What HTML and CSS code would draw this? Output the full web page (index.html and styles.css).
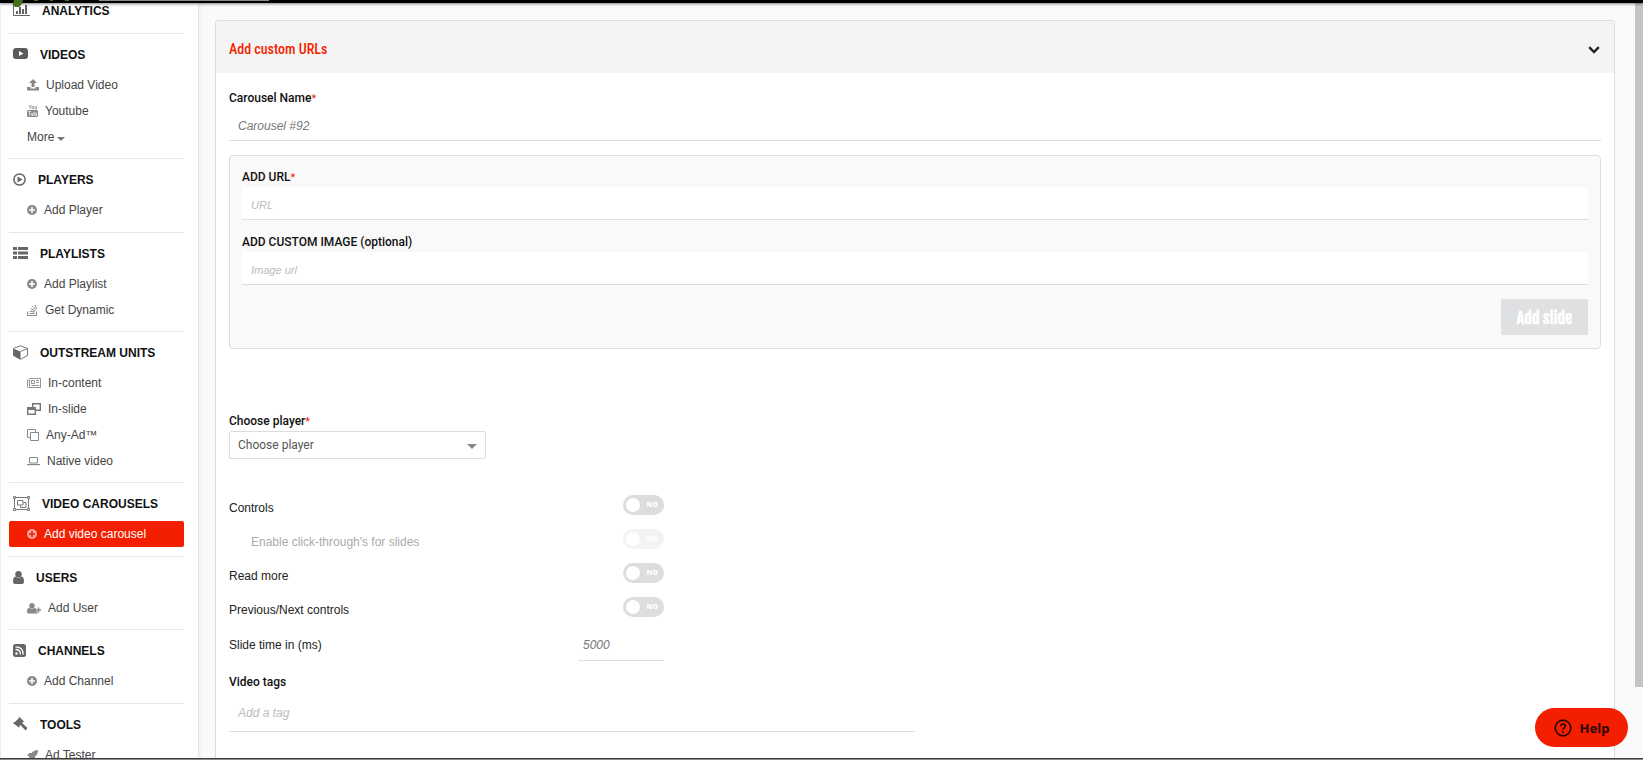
FILE: index.html
```html
<!DOCTYPE html>
<html lang="en">

<head>
    <meta charset="UTF-8">
    <meta name="viewport" content="width=device-width, initial-scale=1.0">
    <title>Add video carousel</title>
    <link rel="stylesheet" href="styles.css">
</head>

<body>
    <div class="topbar">
        <svg width="280" height="8" viewBox="0 0 280 8">
            <path d="M14 0h9l-1 4-3 3h-4l-2-3z" fill="#47701c" />
            <path d="M34 0h4v1h-4zM50 0h3v1h-3zM65 0h4v1h-4z" fill="#47701c" />
            <path d="M99 0h170v1H99z" fill="#8a8a8a" />
        </svg>
    </div>

    <div class="layout">
        <!-- Sidebar -->
        <nav class="sidebar">
            <div class="menu menu-first">
                <h2><svg width="17" height="14" viewBox="0 0 17 14"><path d="M.5 0v12.500H17" fill="none" stroke="#666" /><path d="M3 8h2v3H3zM6 4h2v7H6zM9 6h2v5H9zM12 2h2v9h-2z" fill="#666" /></svg>ANALYTICS</h2>
            </div>

            <div class="menu">
                <h2><svg width="15" height="12" viewBox="0 0 15 12"><rect width="15" height="11" rx="3" fill="#5c5c5c" /><path d="M6 3l4.500 2.500L6 8z" fill="#fff" /></svg>VIDEOS</h2>
                <a href="#"><svg width="12" height="12" viewBox="0 0 12 12"><path d="M6 0l4 4H7.500v4h-3V4H2zM0 8h3.500v1.500h5V8H12v3.500H0z" fill="#888" /></svg>Upload Video</a>
                <a href="#"><svg width="11" height="12" viewBox="0 0 11 12"><path d="M2 0l1.200 2.200V4M4.500 0L3.200 2.200M5 1.500h1.500v2.300H5zM8 1v3h1.500V1" fill="none" stroke="#999" stroke-width=".8" /><rect y="5" width="11" height="7" rx="1.500" fill="#888" /><path d="M1.500 6.500h2.500M2.700 6.500v4M4.800 8v2.500h1.200V8M7.300 6.500v4M8.300 8h1.200v2.500H8" fill="none" stroke="#fff" stroke-width=".8" /></svg>Youtube</a>
                <a href="#">More<span class="caret"></span></a>
            </div>

            <div class="menu menu-short">
                <h2><svg width="13" height="13" viewBox="0 0 13 13"><circle cx="6.500" cy="6.500" r="5.600" fill="none" stroke="#666" stroke-width="1.500" /><path d="M4.500 3.500l5 3-5 3z" fill="#666" /></svg>PLAYERS</h2>
                <a href="#"><svg width="10" height="10" viewBox="0 0 10 10"><circle cx="5" cy="5" r="5" fill="#888" /><path d="M5 2v6M2 5h6" stroke="#fff" stroke-width="1.600" /></svg>Add Player</a>
            </div>

            <div class="menu">
                <h2><svg width="15" height="12" viewBox="0 0 15 12"><path d="M0 0h4v3H0zM5 0h10v3H5zM0 4.500h4v3H0zM5 4.500h10v3H5zM0 9h4v3H0zM5 9h10v3H5z" fill="#666" /></svg>PLAYLISTS</h2>
                <a href="#"><svg width="10" height="10" viewBox="0 0 10 10"><circle cx="5" cy="5" r="5" fill="#888" /><path d="M5 2v6M2 5h6" stroke="#fff" stroke-width="1.600" /></svg>Add Playlist</a>
                <a href="#"><svg width="11" height="12" viewBox="0 0 11 12"><path d="M.5 7.500v4h9v-4M2.500 9.500h5M2.700 7.200l5 .8M3.700 4.700l4.500 2M5.500 2.500L9 5.500M7.700.8l2.200 4" fill="none" stroke="#888" /></svg>Get Dynamic</a>
            </div>

            <div class="menu">
                <h2><svg width="15" height="15" viewBox="0 0 15 15"><path d="M.5 3.500L7.500.700l7 2.800v7l-7 3.800-7-3.800z" fill="#fff" stroke="#777" /><path d="M.5 3.800l7 2.800v7.800l-7-3.800z" fill="#666" /><path d="M7.500 6.500l7-3" stroke="#777" /></svg>OUTSTREAM UNITS</h2>
                <a href="#"><svg width="14" height="10" viewBox="0 0 14 10"><path d="M2.500.500h11v9H1.500q-1 0-1-1V2h2v6.500M4.500 2.500h3v3h-3zM9 2.500h3M9 4.500h3M4.500 7.500H12" fill="none" stroke="#888" stroke-width=".9" /></svg>In-content</a>
                <a href="#"><svg width="14" height="12" viewBox="0 0 14 12"><path d="M.700 4.700h7.600v6.600H.700zM5.700 4V.700h7.600v6.600H9" fill="none" stroke="#777" stroke-width="1.400" /><path d="M0 4h9v3H0z" fill="#777" /></svg>In-slide</a>
                <a href="#"><svg width="12" height="12" viewBox="0 0 12 12"><path d="M3.500 3.500h8v8h-8zM3 8.500H.5v-8h8V3" fill="none" stroke="#888" /></svg>Any-Ad™</a>
                <a href="#"><svg width="13" height="10" viewBox="0 0 13 10"><path d="M2.500 1.500h8v5.500h-8z" fill="none" stroke="#888" /><path d="M0 8h13v1.200H0z" fill="#888" /></svg>Native video</a>
            </div>

            <div class="menu menu-short">
                <h2><svg width="17" height="15" viewBox="0 0 17 15"><path d="M1.500 2v11M15.500 2v11M2 1.500h13M2 13.500h13M4.500 4.500h5.500v4.500H4.500zM10.500 6.500h2.500v5H7.500V9.500" fill="none" stroke="#777" /><path d="M.5.500h2v2h-2zM14.500.500h2v2h-2zM.5 12.500h2v2h-2zM14.500 12.500h2v2h-2z" fill="#fff" stroke="#777" /></svg>VIDEO CAROUSELS</h2>
                <a href="#" class="active"><svg width="10" height="10" viewBox="0 0 10 10"><circle cx="5" cy="5" r="5" fill="#fba69c" /><path d="M5 2v6M2 5h6" stroke="#f31f00" stroke-width="1.600" /></svg>Add video carousel</a>
            </div>

            <div class="menu">
                <h2><svg width="11" height="13" viewBox="0 0 11 13"><circle cx="5.500" cy="3.200" r="3.200" fill="#666" /><path d="M2.500 5.500q3 2.500 6 0Q11 6 11 10.500q0 2.500-2 2.500H2q-2 0-2-2.500Q0 6 2.500 5.500z" fill="#666" /></svg>USERS</h2>
                <a href="#"><svg width="14" height="11" viewBox="0 0 14 11"><circle cx="5" cy="2.700" r="2.700" fill="#888" /><path d="M2.300 4.700q2.700 2 5.400 0 1.300.300 1.300 1.800v2h1.500v2H1.500Q0 10.500 0 9q0-4 2.300-4.300z" fill="#888" /><path d="M11.500 4.500v5M9 7h5" stroke="#888" stroke-width="1.500" /></svg>Add User</a>
            </div>

            <div class="menu menu-short">
                <h2><svg width="13" height="13" viewBox="0 0 13 13"><rect width="13" height="13" rx="2.500" fill="#666" /><circle cx="3.500" cy="9.500" r="1.200" fill="#fff" /><path d="M2.500 5.500q5 0 5 5M2.500 2.800q7.700 0 7.700 7.700" fill="none" stroke="#fff" stroke-width="1.300" /></svg>CHANNELS</h2>
                <a href="#"><svg width="10" height="10" viewBox="0 0 10 10"><circle cx="5" cy="5" r="5" fill="#888" /><path d="M5 2v6M2 5h6" stroke="#fff" stroke-width="1.600" /></svg>Add Channel</a>
            </div>

            <div class="menu">
                <h2><svg width="15" height="14" viewBox="0 0 15 14"><path d="M6.500 0l4.500 4.500-1 1-.6-.3L9 6l5.500 5-2 2.500L7.500 8l-1 .8.300.700-1 1L0 6l1-1 .7.300 3.600-3.600L5.500 1z" fill="#666" /></svg>TOOLS</h2>
                <a href="#"><svg width="11" height="11" viewBox="0 0 11 11"><path d="M11 0Q7 0 4.500 3H2L0 6h2.500l-.7 1.500 1.700 1.700L5 8.500V11l3-2V6.500Q11 4 11 0zM1.500 8.500L0 11l2.500-1.500z" fill="#888" /></svg>Ad Tester</a>
            </div>
        </nav>

        <!-- Content -->
        <main class="content">
            <form class="card">
                <div class="card-header">
                    <h1>Add custom URLs</h1>
                    <button type="button" class="toggle-card" aria-label="Collapse">
                        <svg width="12" height="8" viewBox="0 0 12 8"><path d="M1.200 1.200L6 6l4.800-4.800" fill="none" stroke="#222" stroke-width="2.400" /></svg>
                    </button>
                </div>

                <div class="card-body">
                    <label class="label" for="carouselName">Carousel Name<span class="required">*</span></label>
                    <input type="text" id="carouselName" class="input" placeholder="Carousel #92">

                    <div class="slide-box">
                        <label class="label" for="slideUrl">ADD URL<span class="required">*</span></label>
                        <input type="text" id="slideUrl" class="input input-light" placeholder="URL">
                        <label class="label label-next" for="slideImage">ADD CUSTOM IMAGE (optional)</label>
                        <input type="text" id="slideImage" class="input input-light" placeholder="Image url">
                        <button type="button" class="add-slide" disabled>Add slide</button>
                    </div>

                    <label class="label" for="player">Choose player<span class="required">*</span></label>
                    <div class="select">
                        <select id="player">
                            <option>Choose player</option>
                        </select>
                    </div>

                    <div class="options">
                        <div class="option">
                            <label for="controls">Controls</label>
                            <input type="checkbox" id="controls" class="switch">
                        </div>
                        <div class="option option-disabled">
                            <label for="clickThrough">Enable click-through's for slides</label>
                            <input type="checkbox" id="clickThrough" class="switch" disabled>
                        </div>
                        <div class="option">
                            <label for="readMore">Read more</label>
                            <input type="checkbox" id="readMore" class="switch">
                        </div>
                        <div class="option">
                            <label for="prevNext">Previous/Next controls</label>
                            <input type="checkbox" id="prevNext" class="switch">
                        </div>
                        <div class="option option-time">
                            <label for="slideTime">Slide time in (ms)</label>
                            <input type="text" id="slideTime" class="time-input" placeholder="5000">
                        </div>
                    </div>

                    <label class="label" for="tags">Video tags</label>
                    <input type="text" id="tags" class="input tags-input" placeholder="Add a tag">
                </div>
            </form>
        </main>
    </div>

    <div class="scroll-thumb"></div>
    <button type="button" class="help">
        <svg width="18" height="18" viewBox="0 0 18 18"><circle cx="9" cy="9" r="7.800" fill="none" stroke="#2b0500" stroke-width="1.700" /><path d="M6.700 7.200q0-2.200 2.300-2.200t2.300 2q0 1-1.200 1.800T9 10.800" fill="none" stroke="#2b0500" stroke-width="1.600" /><circle cx="9" cy="13" r="1" fill="#2b0500" /></svg>
        Help
    </button>
    <div class="bottombar"></div>
</body>

</html>
```

FILE: styles.css
```css
* {
    margin: 0;
    padding: 0;
    box-sizing: border-box;
}

body {
    height: 100vh;
    overflow: hidden;
    font-family: "Liberation Sans", Arial, sans-serif;
    font-size: 12px;
    color: #222;
    background-color: #fafafa;
}

.topbar {
    position: fixed;
    top: 0;
    left: 0;
    right: 0;
    height: 3px;
    background-color: #000;
    box-shadow: 0 1px 3px rgba(0, 0, 0, 0.5);
    z-index: 2;
}

.topbar svg {
    display: block;
}

.bottombar {
    position: fixed;
    bottom: 0;
    left: 0;
    right: 0;
    height: 2px;
    background-color: #8c8c8c;
    border-top: 1px solid #3c3c3c;
}

.layout {
    display: flex;
    min-height: 100vh;
}

/* Sidebar */
.sidebar {
    flex: none;
    width: 199px;
    padding: 0 14px 0 8px;
    background-color: #fff;
    border-left: 1px solid #eee;
    border-right: 1px solid #e6e6e6;
    box-shadow: 1px 0 4px rgba(0, 0, 0, 0.06);
}

.menu {
    padding: 12px 0 8px;
    border-top: 1px solid #e6e6e6;
}

.menu-short {
    padding-bottom: 9px;
}

.menu-first {
    padding: 2px 0 5px;
    border-top: none;
}

.menu h2 {
    display: flex;
    align-items: center;
    gap: 12px;
    height: 18px;
    margin-bottom: 8px;
    padding-left: 4px;
    font-size: 12px;
    font-weight: bold;
    color: #111;
}

.menu h2 svg {
    margin-bottom: 2px;
}

.menu a {
    display: flex;
    align-items: center;
    gap: 7px;
    height: 26px;
    padding-left: 18px;
    border-radius: 2px;
    color: #444;
    text-decoration: none;
}

.menu a.active {
    background-color: #f31f00;
    color: #fff;
}

.caret {
    margin: 4px 0 0 -4px;
    border: 4px solid transparent;
    border-top-color: #777;
    border-bottom: none;
}

/* Content */
.content {
    flex: 1;
    display: flex;
    padding: 20px 28px 0 16px;
}

.card {
    flex: 1;
    background-color: #fff;
    border: 1px solid #ddd;
    border-bottom: none;
    border-radius: 4px 4px 0 0;
}

.card-header {
    display: flex;
    align-items: center;
    justify-content: space-between;
    height: 52px;
    padding: 4px 14px 0 13px;
    background-color: #f4f4f4;
    border-radius: 4px 4px 0 0;
}

.card-header h1 {
    font-family: "Roboto Condensed", "Liberation Sans Narrow", Roboto, sans-serif;
    font-size: 14px;
    font-weight: 500;
    color: #f31f00;
}

.toggle-card {
    border: none;
    background: none;
    cursor: pointer;
}

.card-body {
    padding: 17px 13px;
}

.label {
    display: block;
    margin-bottom: 2px;
    font-family: Roboto, sans-serif;
    font-size: 12px;
    font-weight: 500;
    line-height: 16px;
    color: #111;
}

.label-next {
    margin-top: 14px;
}

.required {
    color: #f31f00;
    font-size: 11px;
    font-weight: normal;
    line-height: 1;
}

.input {
    display: block;
    width: 100%;
    height: 33px;
    padding: 3px 9px 0;
    border: none;
    border-bottom: 1px solid #ddd;
    background-color: #fff;
    font-family: "Liberation Sans", Arial, sans-serif;
    font-size: 12px;
}

.input::placeholder,
.time-input::placeholder {
    font-style: italic;
    color: #777;
}

.input-light {
    font-size: 11px;
}

.input-light::placeholder,
.tags-input::placeholder {
    color: #bbb;
}

.slide-box {
    margin: 14px 0 64px;
    padding: 13px 12px;
    background-color: #f9f9f9;
    border: 1px solid #ddd;
    border-radius: 4px;
}

.add-slide {
    display: block;
    width: 87px;
    height: 36px;
    margin: 14px 0 0 auto;
    padding-top: 2px;
    border: none;
    border-radius: 2px;
    background-color: #dfe0e1;
    color: #fff;
    font-family: "Fjalla One", "Liberation Sans Narrow", Roboto, sans-serif;
    font-size: 16px;
    font-weight: bold;
}

.select {
    position: relative;
    width: 257px;
}

.select select {
    display: block;
    width: 100%;
    height: 28px;
    padding: 0 8px;
    appearance: none;
    background-color: #fff;
    border: 1px solid #ddd;
    border-radius: 2px;
    color: #555;
    font-family: Roboto, sans-serif;
    font-size: 12px;
}

.select::after {
    content: "";
    position: absolute;
    top: 13px;
    right: 9px;
    border: 5px solid transparent;
    border-top-color: #888;
    border-bottom: none;
}

.options {
    width: 435px;
    margin: 29px 0 13px;
}

.option {
    display: flex;
    align-items: center;
    justify-content: space-between;
    height: 34px;
}

.option label {
    padding-top: 6px;
}

.option-disabled label {
    padding-left: 22px;
    color: #aaa;
}

.switch {
    position: relative;
    width: 41px;
    height: 20px;
    appearance: none;
    border-radius: 10px;
    background-color: #ddd;
    cursor: pointer;
}

.switch::before {
    content: "";
    position: absolute;
    top: 3px;
    left: 3px;
    width: 14px;
    height: 14px;
    border-radius: 50%;
    background-color: #fff;
}

.switch::after {
    content: "NO";
    position: absolute;
    top: 0;
    right: 6px;
    color: #fff;
    font-family: "Open Sans", sans-serif;
    font-size: 7px;
    font-weight: 800;
    line-height: 20px;
}

.switch:disabled {
    opacity: 0.35;
}

.option-time {
    height: 37px;
}

.option-time label {
    padding-top: 4px;
}

.time-input {
    align-self: flex-end;
    width: 86px;
    height: 32px;
    padding: 0 5px;
    border: none;
    border-bottom: 1px solid #ddd;
    font-family: "Liberation Sans", Arial, sans-serif;
    font-size: 12px;
}

.tags-input {
    width: 50%;
    height: 40px;
}

.scroll-thumb {
    position: fixed;
    top: 3px;
    right: 0;
    width: 8px;
    height: 90vh;
    background-color: #c4c4c4;
}

.help {
    position: fixed;
    right: 15px;
    bottom: 13px;
    display: flex;
    align-items: center;
    justify-content: center;
    gap: 8px;
    width: 93px;
    height: 39px;
    border: none;
    border-radius: 20px;
    background-color: #f31f00;
    color: #2b0500;
    font-family: "Noto Sans", sans-serif;
    font-size: 13px;
    font-weight: bold;
    cursor: pointer;
}
```
